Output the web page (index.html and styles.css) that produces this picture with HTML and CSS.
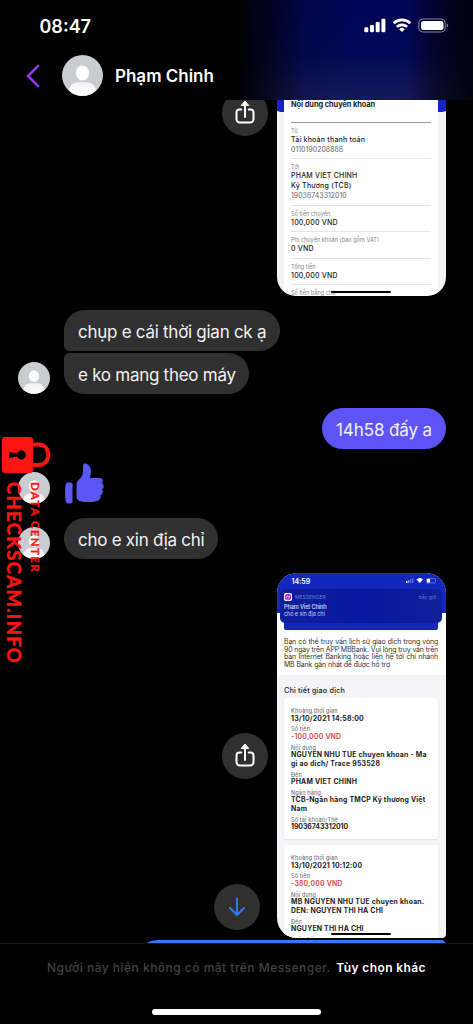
FILE: index.html
```html
<!DOCTYPE html>
<html lang="vi">
<head>
<meta charset="utf-8">
<title>Phạm Chinh</title>
<link rel="stylesheet" href="styles.css">
</head>
<body>
<svg width="0" height="0" class="defs">
  <defs>
    <linearGradient id="body-fade" x1="0" y1="0" x2="0" y2="1"><stop offset="0" stop-color="#f3f3f4"/><stop offset="1" stop-color="#fff"/></linearGradient>
    <symbol id="person" viewBox="0 0 41 41">
      <circle cx="20.500" cy="20.500" r="20.500" fill="#c9ccd1"/>
      <ellipse cx="20.500" cy="18" rx="6.600" ry="7.400" fill="#fff"/>
      <path d="M6.800 35.500C8 30 11.500 27.300 16 27.300h9c4.500 0 8 2.700 9.200 8.200A20.500 20.500 0 0 1 6.800 35.500z" fill="url(#body-fade)"/>
    </symbol>
    <symbol id="share" viewBox="0 0 24 28">
      <path d="M8.300 10.500H6.500a3 3 0 0 0-3 3v6.500a3.500 3.500 0 0 0 3.500 3.500h10a3.500 3.500 0 0 0 3.500-3.500v-6.500a3 3 0 0 0-3-3h-1.800M12 18V6" fill="none" stroke="#fff" stroke-width="2" stroke-linecap="round"/>
      <path d="M12 2l3.800 4.500H8.200z" fill="#fff" stroke="#fff" stroke-linejoin="round"/>
    </symbol>
  </defs>
</svg>
<div class="phone">
  <header class="top">
    <div class="status">
      <span class="clock">08:47</span>
      <svg class="status-icons" width="86" height="16" viewBox="0 0 86 16" fill="#fff">
        <rect x="0.300" y="9.300" width="4" height="5" rx="1.200"/><rect x="6" y="6.900" width="4" height="7.400" rx="1.200"/><rect x="11.700" y="3.900" width="4" height="10.400" rx="1.200"/><rect x="17.400" y="0.800" width="4" height="13.500" rx="1.200"/>
        <g fill="none" stroke="#fff" stroke-width="2.700"><path d="M29.700 5.300a12 12 0 0 1 16.600 0"/><path d="M32.900 8.900a7.300 7.300 0 0 1 10.200 0"/></g><path d="M38 13.900l-2.800-2.700a4 4 0 0 1 5.600 0z"/>
        <rect x="54.800" y="1" width="26.400" height="13" rx="4" fill="none" stroke="#8086aa"/><rect x="57" y="3" width="22.500" height="9" rx="2.500"/><path d="M82.700 5.300c2 .8 2 3.600 0 4.400z" fill="#8086aa"/>
      </svg>
    </div>
    <div class="contact">
      <svg class="back" width="14" height="24" viewBox="0 0 14 24"><path d="M12 2L2 12l10 10" fill="none" stroke="#8e36ee" stroke-width="2.500" stroke-linecap="round" stroke-linejoin="round"/></svg>
      <svg class="contact-photo"><use href="#person"/></svg>
      <h1 class="name">Phạm Chinh</h1>
    </div>
  </header>

  <main class="chat">
    <div class="media-row first">
      <span class="round share-top"><svg width="24" height="28"><use href="#share"/></svg></span>
      <div class="shot transfer">
        <div class="transfer-sheet">
          <div class="sheet-title">Nội dung chuyển khoản</div>
          <div class="item"><small>Từ</small><b>Tài khoản thanh toán</b><i>0110190208888</i></div>
          <div class="item"><small>Tới</small><b>PHAM VIET CHINH</b><b>Kỹ Thương (TCB)</b><i>19036743312010</i></div>
          <div class="item"><small>Số tiền chuyển</small><b>100,000 VND</b></div>
          <div class="item"><small>Phí chuyển khoản (bao gồm VAT)</small><b>0 VND</b></div>
          <div class="item"><small>Tổng tiền</small><b>100,000 VND</b></div>
          <div class="item"><small>Số tiền bằng chữ</small></div>
        </div>
        <span class="home-bar"></span>
      </div>
    </div>

    <div class="row r1"><span class="bubble open-bottom b1">chụp e cái thời gian ck ạ</span></div>
    <div class="row r2"><svg class="photo"><use href="#person"/></svg><span class="bubble open-top b2">e ko mang theo máy</span></div>
    <div class="row mine"><span class="bubble b3">14h58 đấy a</span></div>
    <div class="row thumb-row"><svg class="photo"><use href="#person"/></svg>
      <svg class="thumb" width="40" height="41" viewBox="0 0 40 41" fill="#5b56f5"><path d="M2.500 19.500h4q2 0 2 2v17q0 2-2 2h-3Q1 40.500 1 30q0-8.500 1.500-10.500z"/><path d="M12.500 21.500q0-3 2-4.500c3-2.500 4.500-5 4.500-9V3c0-2 1-2.800 2.500-2.500 4 .7 5.500 4.500 5.500 8 0 2.500-1 4.500-.8 6.500H36c3 0 3.600 3 1.800 5 2.700 1.500 2.500 5 .2 6.300 1.500 2 .8 5-1.400 5.900.8 3-1 5-3.600 5.700-3 .9-6.500 1.100-10 1.100-4 0-7.500-.6-9-1.800-1-1-1.500-2-1.500-4z"/></svg></div>
    <div class="row r5"><svg class="photo"><use href="#person"/></svg><span class="bubble b4">cho e xin địa chỉ</span></div>

    <div class="media-row second">
      <span class="round"><svg width="24" height="28"><use href="#share"/></svg></span>
      <div class="shot history">
        <div class="history-top">
          <div class="mini-status"><span>14:59</span>
            <svg width="32" height="7" viewBox="0 0 32 7" fill="#fff"><rect x="1" y="4" width="1.500" height="2"/><rect x="3" y="3" width="1.300" height="3" opacity=".5"/><rect x="5" y="2" width="1.300" height="4" opacity=".3"/><rect x="7" y="1" width="1.300" height="5" opacity=".3"/><path d="M11.500 2.500q3.500-3 6.500 0L14.800 6z"/><rect x="21.500" y="1.500" width="9" height="4.500" rx="1" fill="none" stroke="#8d99e8" stroke-width=".6"/><rect x="22" y="2" width="3" height="3.500"/></svg>
          </div>
        </div>
        <div class="notice">
          <div class="notice-head"><svg width="8" height="8" viewBox="0 0 8 8"><rect width="8" height="8" rx="1.800" fill="#fff"/><circle cx="4" cy="4" r="3.200" fill="#a52cf0"/><path d="M1.500 6A3.200 3.200 0 0 0 7 5z" fill="#f0589b"/><path d="M2 4.800L3.500 3.200l1 .9L6 3.200" stroke="#fff" fill="none" stroke-width=".8"/></svg><span class="app">MESSENGER</span><span class="now">bây giờ</span></div>
          <div class="sender">Phạm Viet Chinh</div><div class="preview">cho e xin địa chỉ</div>
        </div>
        <div class="history-intro">
          <div class="blue-strip"></div>
          <p>Bạn có thể truy vấn lịch sử giao dịch trong vòng</p>
          <p>90 ngày trên APP MBBank. Vui lòng truy vấn trên</p>
          <p>bản Internet Banking hoặc liên hệ tới chi nhánh</p>
          <p class="last">MB Bank gần nhất để được hỗ trợ</p>
        </div>
        <div class="detail-title">Chi tiết giao dịch</div>
        <div class="card">
          <div class="field"><small>Khoảng thời gian</small><b>13/10/2021 14:58:00</b></div>
          <div class="field"><small>Số tiền</small><b class="minus">-100,000 VND</b></div>
          <div class="field"><small>Nội dung</small><b>NGUYEN NHU TUE chuyen khoan - Ma</b><b>gi ao dich/ Trace 953528</b></div>
          <div class="field"><small>Đến</small><b>PHAM VIET CHINH</b></div>
          <div class="field"><small>Ngân hàng</small><b>TCB-Ngân hàng TMCP Kỹ thương Việt</b><b>Nam</b></div>
          <div class="field"><small>Số tài khoản/Thẻ</small><b class="account">19036743312010</b></div>
        </div>
        <div class="card">
          <div class="field"><small>Khoảng thời gian</small><b>13/10/2021 10:12:00</b></div>
          <div class="field"><small>Số tiền</small><b class="minus">-380,000 VND</b></div>
          <div class="field"><small>Nội dung</small><b>MB NGUYEN NHU TUE chuyen khoan.</b><b>DEN: NGUYEN THI HA CHI</b></div>
          <div class="field"><small>Đến</small><b>NGUYEN THI HA CHI</b></div>
          <div class="field"><small>Ngân hàng</small></div>
        </div>
        <span class="home-bar"></span>
      </div>
    </div>
    <div class="row next"><span class="bubble next-bubble"></span></div>
    <span class="round jump"><svg width="20" height="22" viewBox="0 0 20 22"><path d="M10 2.500v16M3 12l7 7 7-7" fill="none" stroke="#3478f6" stroke-width="2" stroke-linecap="round" stroke-linejoin="round"/></svg></span>
  </main>

  <footer class="bottom">
    <p class="away"><span class="away-text">Người này hiện không có mặt trên Messenger.</span><strong>Tùy chọn khác</strong></p>
    <span class="home"></span>
  </footer>

  <div class="watermark">
    <svg width="49" height="36" viewBox="0 0 49 36"><path d="M31 7.500h5c7 0 10.300 4.700 10.300 10.300S43 28 36 28h-5" fill="none" stroke="#ff1414" stroke-width="4"/><path fill-rule="evenodd" fill="#ff1414" d="M3 0h25q3 0 3 3v30q0 3-3 3H3q-3 0-3-3V3q0-3 3-3zM7 15v6l8-1.500a4.600 4.600 0 1 0 0-3.200z"/></svg>
    <div class="words"><span class="site">CHECKSCAM.INFO</span><span class="tag">DATA CENTER</span></div>
  </div>
</div>
</body>
</html>
```
FILE: styles.css
```css
* { box-sizing: border-box; }
body { margin: 0; background: #000; font-family: Inter, "Noto Sans", sans-serif; color: #fff; }
.defs { position: absolute; }
.phone { position: relative; width: 473px; height: 1024px; overflow: hidden; display: flex; flex-direction: column; background: #000; }

.top {
  height: 100px; flex: none; padding-top: 16px; position: relative; z-index: 2;
  background:
    linear-gradient(90deg, #000 235px, rgba(0,0,0,.62) 270px, rgba(0,0,0,.15) 305px, transparent 350px, transparent 405px, rgba(0,0,0,.5) 435px, rgba(0,0,0,.88) 473px),
    linear-gradient(180deg, #020557 0, #030957 55px, #10155a 85px, #15195a 100px);
}
.status { display: flex; justify-content: space-between; height: 39px; padding: 0 23px 0 39.500px; }
.clock { font-size: 18px; line-height: 21px; font-weight: 600; letter-spacing: 0; }
.status-icons { margin-top: 2px; }
.contact { display: flex; align-items: center; height: 41px; padding-left: 26px; }
.contact-photo { width: 41px; height: 41px; margin-left: 22px; }
.name { margin: 0 0 0 12px; font-size: 17px; font-weight: 600; line-height: 22px; letter-spacing: 0; }

.chat { position: relative; height: 843px; flex: none; overflow: hidden; }
.media-row { display: flex; justify-content: flex-end; padding-right: 27px; gap: 9px; }
.first { height: 196px; }
.second { height: 365px; margin-top: 14px; align-items: center; }
.round { width: 46px; height: 46px; border-radius: 50%; background: #303030; display: flex; align-items: center; justify-content: center; flex: none; }
.share-top { margin-top: -10px; }
.round svg { display: block; }
.shot { position: relative; width: 169px; overflow: hidden; color: #222; white-space: nowrap; }
.shot b, .shot i, .shot small { display: block; font-style: normal; }
.home-bar { position: absolute; left: 54px; bottom: 3px; width: 60px; height: 2px; border-radius: 1px; background: #000; }

.transfer { height: 196px; border-radius: 0 0 19px 19px; background: linear-gradient(172deg, transparent 12px, #f4f4f6 12.500px) right 0 top 0 / 8px 100% no-repeat, linear-gradient(188deg, transparent 12px, #f4f4f6 12.500px) left 0 top 0 / 8px 100% no-repeat, #1721cc; }
.transfer-sheet { margin: 0 8px 0 7px; padding: 0 7px; height: 196px; background: #fff; }
.sheet-title { height: 22.500px; border-bottom: 1px solid #999; font-size: 7.400px; line-height: 10px; font-weight: 700; letter-spacing: -.05px; }
.item { padding: 4px 0 3.600px; border-bottom: 1px solid #e6e6e6; }
.item small { font-size: 5.600px; line-height: 8px; color: #888; }
.item b { font-size: 7px; line-height: 10px; font-weight: 500; letter-spacing: .22px; }
.item i { font-size: 7px; line-height: 10px; color: #666; }

.row { display: flex; align-items: flex-end; padding-left: 18px; }
.photo { width: 32px; height: 32px; flex: none; margin-right: 14px; }
.bubble { height: 41px; border-radius: 20.500px; background: #303030; padding: 0 0 0 14px; font-size: 17px; line-height: 45px; color: #f2f2f2; letter-spacing: -.27px; white-space: nowrap; }
.r1 { margin-top: 14px; padding-left: 64px; }
.r2 { margin-top: 2px; }
.open-bottom { border-bottom-left-radius: 5px; }
.open-top { border-top-left-radius: 5px; }
.b1 { width: 216px; }
.b2 { width: 185px; }
.b3 { width: 124px; background: #5e53f6; letter-spacing: -.1px; }
.b4 { width: 154px; }
.mine { margin-top: 14px; justify-content: flex-end; padding-right: 27px; }
.thumb-row { margin-top: 14px; height: 41px; }
.r5 { margin-top: 14px; }

.history { height: 365px; border-radius: 20px 20px 4px 20px; background: #f5f5f8; }
.history-top { height: 40px; background: #1427bd; }
.mini-status { display: flex; justify-content: space-between; padding: 4px 9px 0 14.500px; font-size: 7px; line-height: 9px; font-weight: 600; color: #fff; }
.notice { position: absolute; z-index: 1; left: 3px; top: 16px; width: 162px; height: 34px; border-radius: 5px; padding: 4px 6px 0 4px; background: linear-gradient(90deg, #10209a, #0617a0 50%, #10209a); color: #cbd0f0; font-size: 5.500px; letter-spacing: -.1px; }
.notice-head { display: flex; align-items: center; height: 8px; letter-spacing: 0; }
.app { margin-left: 3px; font-size: 5px; color: #6f79d6; }
.now { margin-left: auto; font-size: 5px; color: #6f79d6; }
.sender { font-weight: 600; line-height: 7px; margin-top: 3px; }
.preview { line-height: 7px; }
.history-intro { height: 62px; padding: 0 8px 0 7px; background: #fff; font-size: 6.900px; letter-spacing: -.13px; color: #333; }
.blue-strip { height: 17px; margin-bottom: 8px; background: #1427bd; border-radius: 0 0 2px 2px; }
.history-intro p { margin: 0; line-height: 7.500px; white-space: normal; text-align: justify; text-align-last: justify; }
.history-intro .last { width: 106px; letter-spacing: -.1px; }
.detail-title { height: 22.500px; padding: 10px 0 0 7px; font-size: 7.300px; line-height: 11px; font-weight: 500; letter-spacing: .15px; }
.card { margin: 0 8px 6px 7px; height: 141px; padding: 10.500px 0 0 7px; display: flex; flex-direction: column; gap: 3.300px; background: #fff; border-radius: 2px; box-shadow: 0 1px 2px #dfe1ec; }
.field small { font-size: 5.500px; line-height: 6.300px; font-weight: 500; letter-spacing: .15px; color: #777; }
.field b { position: relative; font-size: 6.900px; line-height: 8.700px; font-weight: 700; letter-spacing: .22px; }
.field small + b { margin-top: .3px; }
.field b:last-child { margin-bottom: -.3px; }
.field .minus { color: #cf4640; font-weight: 600; }
.field .account { letter-spacing: -.05px; }

.next { margin-top: 2px; justify-content: flex-end; padding-right: 27px; }
.next-bubble { width: 309px; background: #3478f6; border-top-right-radius: 5px; }
.jump { position: absolute; left: 213.500px; bottom: 13px; }

.bottom { height: 81px; flex: none; border-top: 1px solid #181818; display: flex; flex-direction: column; align-items: center; }
.away { margin: 14px 0 0; display: flex; gap: 5.500px; font-size: 12px; line-height: 20px; white-space: nowrap; }
.away-text { color: #424242; font-weight: 500; letter-spacing: .48px; }
.away strong { font-weight: 600; letter-spacing: .4px; }
.home { width: 169px; height: 6px; margin-top: 31px; border-radius: 3px; background: #fff; }

.watermark { position: absolute; left: 2px; top: 437px; z-index: 3; color: #ff1414; font-family: Lato, sans-serif; }
.watermark svg { display: block; }
.words { display: flex; margin-top: 9px; }
.words span { writing-mode: vertical-rl; white-space: nowrap; font-weight: 700; }
.site { width: 24px; line-height: 24px; font-size: 18.500px; letter-spacing: 1.300px; -webkit-text-stroke: .5px #ff1414; }
.tag { width: 19px; line-height: 19px; font-size: 11.500px; letter-spacing: 1.350px; -webkit-text-stroke: .3px #ff1414; }
```
